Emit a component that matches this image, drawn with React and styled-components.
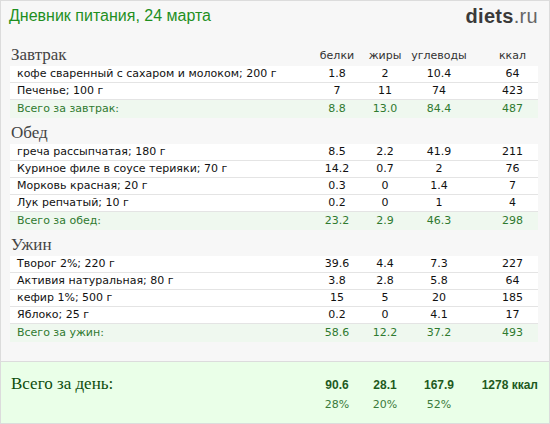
import React from "react";
import styled, { createGlobalStyle } from "styled-components";

const GlobalStyle = createGlobalStyle`
  html, body {
    margin: 0;
    padding: 0;
    background: #ffffff;
  }
  * {
    box-sizing: border-box;
  }
`;

const COLS = "1fr 52px 44px 64px 67px";

const Page = styled.div`
  width: 550px;
  height: 424px;
  border: 1px solid #dcdcdc;
  background: #f7f7f7;
  display: flex;
  flex-direction: column;
  overflow: hidden;
`;

const Header = styled.div`
  height: 39px;
  display: flex;
  justify-content: space-between;
  align-items: flex-start;
  padding: 4px 11px 0 8px;
`;

const Title = styled.h1`
  margin: 0;
  font-family: "Liberation Sans", Arial, sans-serif;
  font-weight: normal;
  font-size: 16px;
  line-height: 22px;
  color: #1f8f1f;
`;

const Logo = styled.div`
  font-family: "Liberation Sans", Arial, sans-serif;
  font-size: 20px;
  line-height: 22px;
  color: #666;
  letter-spacing: 0.3px;

  b {
    color: #3a3a3a;
  }
`;

const Body = styled.div`
  flex: 1;
  padding: 0 11px 0 9px;
`;

const Section = styled.section``;

const SectionHead = styled.div`
  display: grid;
  grid-template-columns: ${COLS};
  height: 26px;
  align-items: end;
  padding-bottom: 3px;
`;

const MealName = styled.div`
  font-family: "Liberation Serif", "Times New Roman", serif;
  font-size: 17px;
  line-height: 17px;
  color: #444;
  padding-left: 1px;
`;

const ColLabel = styled.div`
  font-family: "DejaVu Sans", Verdana, sans-serif;
  font-size: 11px;
  line-height: 14px;
  color: #333;
  text-align: center;
  padding-left: ${(p) => (p.$wide ? "16px" : "0")};
`;

const Row = styled.div`
  display: grid;
  grid-template-columns: ${COLS};
  height: ${(p) => (p.$total ? "18px" : "17px")};
  align-items: center;
  background: ${(p) => (p.$total ? "#eff8ef" : "#ffffff")};
  border-bottom: ${(p) => (p.$total ? "none" : "1px solid #e4e4e4")};
  font-family: "DejaVu Sans", Verdana, sans-serif;
  font-size: 11px;
  line-height: 16px;
  color: ${(p) => (p.$total ? "#2f7a2f" : "#111")};
`;

const Name = styled.div`
  padding-left: 7px;
  white-space: nowrap;
`;

const Num = styled.div`
  text-align: center;
  padding-left: ${(p) => (p.$wide ? "16px" : "0")};
`;

const Footer = styled.div`
  height: 62px;
  border-top: 1px solid #dcdcdc;
  background: #eaffe8;
  padding: 12px 11px 0 9px;
`;

const FooterRow = styled.div`
  display: grid;
  grid-template-columns: ${COLS};
  align-items: baseline;
  height: ${(p) => (p.$small ? "18px" : "24px")};
`;

const DayLabel = styled.div`
  font-family: "Liberation Serif", "Times New Roman", serif;
  font-size: 17px;
  color: #0d4d0d;
  padding-left: 1px;
`;

const DayTotal = styled.div`
  font-family: "Liberation Sans", Arial, sans-serif;
  font-weight: bold;
  font-size: 12px;
  color: #1e5a1e;
  text-align: ${(p) => (p.$right ? "right" : "center")};
  white-space: nowrap;
`;

const Percent = styled.div`
  font-family: "DejaVu Sans", Verdana, sans-serif;
  font-size: 11px;
  color: #3b7a3b;
  text-align: center;
`;

const meals = [
  {
    name: "Завтрак",
    labels: true,
    items: [
      ["кофе сваренный с сахаром и молоком; 200 г", "1.8", "2", "10.4", "64"],
      ["Печенье; 100 г", "7", "11", "74", "423"],
    ],
    total: ["Всего за завтрак:", "8.8", "13.0", "84.4", "487"],
  },
  {
    name: "Обед",
    items: [
      ["греча рассыпчатая; 180 г", "8.5", "2.2", "41.9", "211"],
      ["Куриное филе в соусе терияки; 70 г", "14.2", "0.7", "2", "76"],
      ["Морковь красная; 20 г", "0.3", "0", "1.4", "7"],
      ["Лук репчатый; 10 г", "0.2", "0", "1", "4"],
    ],
    total: ["Всего за обед:", "23.2", "2.9", "46.3", "298"],
  },
  {
    name: "Ужин",
    items: [
      ["Творог 2%; 220 г", "39.6", "4.4", "7.3", "227"],
      ["Активия натуральная; 80 г", "3.8", "2.8", "5.8", "64"],
      ["кефир 1%; 500 г", "15", "5", "20", "185"],
      ["Яблоко; 25 г", "0.2", "0", "4.1", "17"],
    ],
    total: ["Всего за ужин:", "58.6", "12.2", "37.2", "493"],
  },
];

const DataRow = ({ cells, total }) => (
  <Row $total={total}>
    <Name>{cells[0]}</Name>
    <Num>{cells[1]}</Num>
    <Num>{cells[2]}</Num>
    <Num>{cells[3]}</Num>
    <Num $wide>{cells[4]}</Num>
  </Row>
);

export default function App() {
  return (
    <>
      <GlobalStyle />
      <Page>
        <Header>
          <Title>Дневник питания, 24 марта</Title>
          <Logo>
            <b>diets</b>.ru
          </Logo>
        </Header>
        <Body>
          {meals.map((meal) => (
            <Section key={meal.name}>
              <SectionHead>
                <MealName>{meal.name}</MealName>
                {meal.labels && (
                  <>
                    <ColLabel>белки</ColLabel>
                    <ColLabel>жиры</ColLabel>
                    <ColLabel>углеводы</ColLabel>
                    <ColLabel $wide>ккал</ColLabel>
                  </>
                )}
              </SectionHead>
              {meal.items.map((item) => (
                <DataRow key={item[0]} cells={item} />
              ))}
              <DataRow cells={meal.total} total />
            </Section>
          ))}
        </Body>
        <Footer>
          <FooterRow>
            <DayLabel>Всего за день:</DayLabel>
            <DayTotal>90.6</DayTotal>
            <DayTotal>28.1</DayTotal>
            <DayTotal>167.9</DayTotal>
            <DayTotal $right>1278 ккал</DayTotal>
          </FooterRow>
          <FooterRow $small>
            <div />
            <Percent>28%</Percent>
            <Percent>20%</Percent>
            <Percent>52%</Percent>
            <div />
          </FooterRow>
        </Footer>
      </Page>
    </>
  );
}
